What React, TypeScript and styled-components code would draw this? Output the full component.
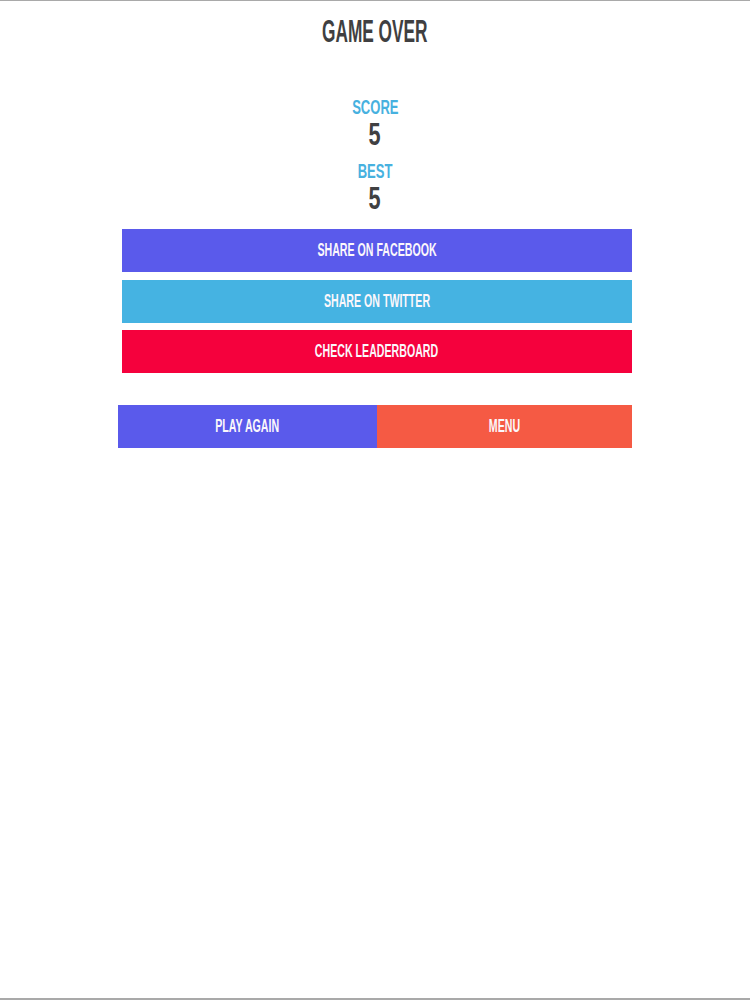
import React from "react";
import styled, { createGlobalStyle } from "styled-components";

const GlobalStyle = createGlobalStyle`
  html, body {
    margin: 0;
    padding: 0;
    background: #ffffff;
  }
  body {
    font-family: "Liberation Sans", Arial, sans-serif;
  }
`;

const Page = styled.div`
  min-height: 100vh;
  box-sizing: border-box;
  border-top: 1px solid #a9a9a9;
  border-bottom: 2px solid #a9a9a9;
  display: flex;
  flex-direction: column;
  align-items: center;
`;

// condensed display type: bold sans squeezed horizontally
const Squeeze = styled.span<{ $scale: number }>`
  display: inline-block;
  transform: scaleX(${({ $scale }) => $scale});
  white-space: nowrap;
`;

const Title = styled.h1`
  margin: 14px 0 0;
  font-size: 32px;
  line-height: 32px;
  font-weight: 700;
  color: #3f3f41;
  text-align: center;
`;

const Stats = styled.div`
  margin-top: 49px;
  display: flex;
  flex-direction: column;
  align-items: center;
`;

const StatLabel = styled.div<{ $gap?: number }>`
  margin-top: ${({ $gap }) => $gap ?? 0}px;
  font-size: 21px;
  line-height: 21px;
  font-weight: 700;
  color: #47b1df;
`;

const StatValue = styled.div`
  margin-top: 2px;
  font-size: 31px;
  line-height: 31px;
  font-weight: 700;
  color: #404042;
`;

const ButtonStack = styled.div`
  margin: 15px 0 0 4px;
  width: 510px;
  display: flex;
  flex-direction: column;
  gap: 7.5px;
`;

const Button = styled.button<{ $bg: string }>`
  display: block;
  width: 100%;
  height: 43px;
  padding: 0;
  border: none;
  background: ${({ $bg }) => $bg};
  color: #fbf7fb;
  font-family: "Liberation Sans", Arial, sans-serif;
  font-size: 18px;
  line-height: 43px;
  font-weight: 700;
  text-align: center;
  cursor: pointer;
`;

const BottomRow = styled.div`
  margin-top: 32px;
  width: 514px;
  display: grid;
  grid-template-columns: 259px 1fr;
`;

const App: React.FC = () => {
  return (
    <>
      <GlobalStyle />
      <Page>
        <Title>
          <Squeeze $scale={0.54}>GAME OVER</Squeeze>
        </Title>

        <Stats>
          <StatLabel>
            <Squeeze $scale={0.62}>SCORE</Squeeze>
          </StatLabel>
          <StatValue>
            <Squeeze $scale={0.7}>5</Squeeze>
          </StatValue>
          <StatLabel $gap={10}>
            <Squeeze $scale={0.62}>BEST</Squeeze>
          </StatLabel>
          <StatValue>
            <Squeeze $scale={0.7}>5</Squeeze>
          </StatValue>
        </Stats>

        <ButtonStack>
          <Button $bg="#5a5aeb">
            <Squeeze $scale={0.59}>SHARE ON FACEBOOK</Squeeze>
          </Button>
          <Button $bg="#45b3e2">
            <Squeeze $scale={0.59}>SHARE ON TWITTER</Squeeze>
          </Button>
          <Button $bg="#f5013d">
            <Squeeze $scale={0.59}>CHECK LEADERBOARD</Squeeze>
          </Button>
        </ButtonStack>

        <BottomRow>
          <Button $bg="#5a5aeb">
            <Squeeze $scale={0.59}>PLAY AGAIN</Squeeze>
          </Button>
          <Button $bg="#f55a44">
            <Squeeze $scale={0.59}>MENU</Squeeze>
          </Button>
        </BottomRow>
      </Page>
    </>
  );
};

export default App;
